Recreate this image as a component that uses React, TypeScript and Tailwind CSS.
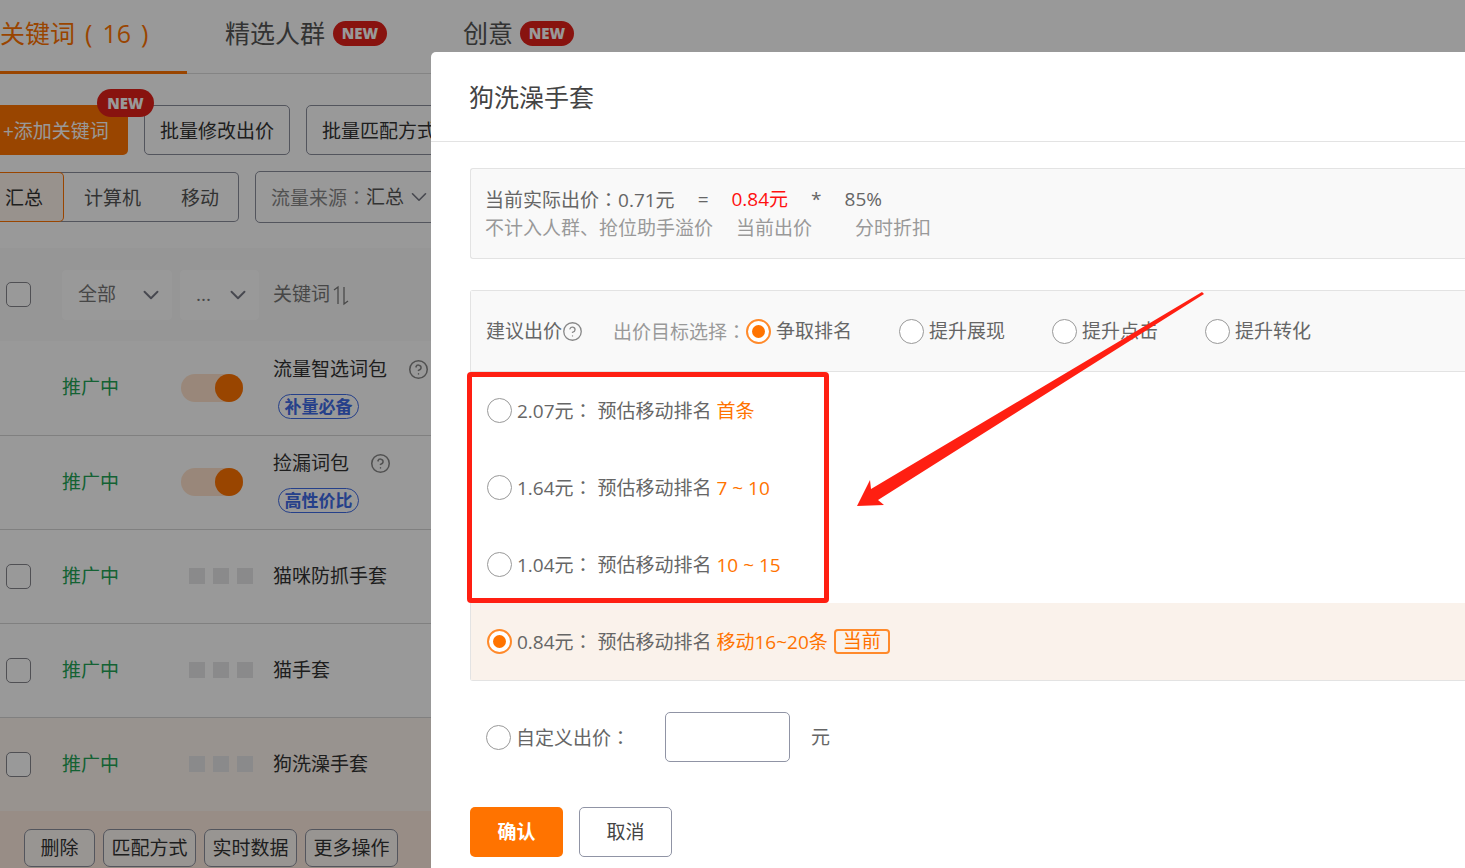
import { useState } from "react";
import type { ReactNode } from "react";
import { ChevronDown, CircleHelp } from "lucide-react";

type Keyword = {
	name: string;
	tag?: string;
	active?: boolean;
};

const KEYWORDS: Keyword[] = [
	{ name: "流量智选词包", tag: "补量必备" },
	{ name: "捡漏词包", tag: "高性价比" },
	{ name: "猫咪防抓手套" },
	{ name: "猫手套" },
	{ name: "狗洗澡手套", active: true },
];

const TARGETS = ["争取排名", "提升展现", "提升点击", "提升转化"];

const BIDS = [
	{ price: "2.07", rank: "首条" },
	{ price: "1.64", rank: "7 ~ 10" },
	{ price: "1.04", rank: "10 ~ 15" },
];

const CURRENT_BID = { price: "0.84", rank: "移动16~20条" };

// the TC face centres the colon in its cell
function Colon() {
	return <span className="font-['Noto_Sans_CJK_TC',sans-serif]">：</span>;
}

function NewBadge({ className = "" }: { className?: string }) {
	return (
		<span
			className={`flex items-center justify-center rounded-full bg-[#e3211a] font-['Noto_Sans',sans-serif] text-[15px] leading-none font-black text-white ${className}`}
		>
			NEW
		</span>
	);
}

function SortIcon() {
	return (
		<svg
			width="20"
			height="22"
			viewBox="0 0 20 22"
			fill="none"
			stroke="currentColor"
			strokeWidth="1.25"
			aria-hidden="true"
		>
			<path d="M3 6 L7 3 V20" />
			<path d="M13 3 V20 L17 17" />
		</svg>
	);
}

function Radio({
	name,
	checked,
	onChange,
	children,
}: {
	name: string;
	checked: boolean;
	onChange: () => void;
	children: ReactNode;
}) {
	return (
		<label className="flex items-center gap-[5px] whitespace-pre">
			<input
				type="radio"
				name={name}
				checked={checked}
				onChange={onChange}
				className="grid size-[25px] shrink-0 appearance-none place-content-center rounded-full border border-[#999] bg-white before:size-[13px] before:rounded-full checked:border-2 checked:border-[#ff8a2b] checked:before:bg-[#ff7300]"
			/>
			{children}
		</label>
	);
}

function BidLabel({ price, rank }: { price: string; rank: string }) {
	return (
		<span>
			{price}元
			<Colon /> 预估移动排名 <span className="text-[#ff7300]">{rank}</span>
		</span>
	);
}

function Check({ label }: { label: string }) {
	return (
		<input
			type="checkbox"
			aria-label={label}
			className="block size-[25px] appearance-none rounded-[5px] border border-[#85858c] bg-white checked:bg-[#ff7300]"
		/>
	);
}

function FilterSelect({
	label,
	value,
	className,
}: {
	label: string;
	value: string;
	className: string;
}) {
	return (
		<span className={`relative inline-flex h-[50px] ${className}`}>
			<select
				aria-label={label}
				className="w-full appearance-none rounded-sm bg-white pl-4 text-[#777]"
			>
				<option>{value}</option>
			</select>
			<ChevronDown
				size={26}
				strokeWidth={1.75}
				className="pointer-events-none absolute top-3 right-2 text-[#777985]"
			/>
		</span>
	);
}

function Tabs() {
	return (
		<nav className="flex h-[74px] border-b border-[#dcdcdc] text-[25px] text-[#555]">
			<a
				href="#keywords"
				className="-mb-px flex w-[187px] gap-2.5 border-b-[3px] border-[#ff7300] pt-[14px] leading-[38px] whitespace-nowrap text-[#ff7300]"
			>
				<span>关键词</span>
				<span>(</span>
				<span>16</span>
				<span>)</span>
			</a>
			<a
				href="#people"
				className="ml-[38px] flex h-[66px] w-[238px] items-center gap-2"
			>
				精选人群
				<NewBadge className="h-[25px] w-[54px]" />
			</a>
			<a href="#creative" className="flex h-[66px] items-center gap-[7px]">
				创意
				<NewBadge className="h-[25px] w-[54px]" />
			</a>
		</nav>
	);
}

function Toolbar() {
	return (
		<div className="flex h-[174px] flex-col pt-[31px]">
			<div className="flex h-[50px] shrink-0 gap-4">
				<button className="relative w-32 rounded-r-[5px] bg-[#ff7300] pt-0.5 pl-[3px] text-left whitespace-nowrap text-white">
					+添加关键词
					<NewBadge className="absolute -top-4 left-[97px] h-7 w-[57px]" />
				</button>
				<button className="w-[146px] rounded-[5px] border border-[#8b8e9c] pt-0.5">
					批量修改出价
				</button>
				<button className="w-[146px] rounded-[5px] border border-[#8b8e9c] pt-0.5">
					批量匹配方式
				</button>
			</div>
			<div className="mt-4 flex items-center gap-4 text-[#555]">
				<div className="flex h-[50px] w-[239px] rounded-r-[5px] border border-l-0 border-[#8b8e9c]">
					<button className="-my-px w-16 rounded-r-[5px] border border-l-0 border-[#ff7300] bg-[#fdf3ec] pt-0.5 pl-[5px] text-left text-[#333]">
						汇总
					</button>
					<button className="ml-5 pt-0.5">计算机</button>
					<button className="ml-10 pt-0.5">移动</button>
				</div>
				<button className="flex h-[52px] w-[190px] items-center rounded-[5px] border border-[#8b8e9c] pl-[15px] whitespace-nowrap">
					<span className="text-[#888]">
						流量来源
						<Colon />
					</span>
					汇总
					<ChevronDown
						size={26}
						strokeWidth={1.5}
						className="ml-0.5 text-[#777985]"
					/>
				</button>
			</div>
		</div>
	);
}

function KeywordTable() {
	return (
		<table className="w-full table-fixed text-left">
			<colgroup>
				<col className="w-[62px]" />
				<col className="w-[118px]" />
				<col className="w-[93px]" />
				<col />
			</colgroup>
			<thead>
				<tr className="h-[93px] bg-[#fafafa] text-[#777]">
					<th className="pl-1.5 font-normal">
						<Check label="全选" />
					</th>
					<th className="align-middle font-normal">
						<FilterSelect label="状态" value="全部" className="w-[110px]" />
					</th>
					<th className="font-normal">
						<FilterSelect label="类型" value="..." className="w-[79px]" />
					</th>
					<th className="font-normal">
						<button className="flex items-center gap-px">
							关键词
							<SortIcon />
						</button>
					</th>
				</tr>
			</thead>
			<tbody>
				{KEYWORDS.map((k) => (
					<tr
						key={k.name}
						className={
							k.active
								? "h-[94px] bg-[#fdf5ee]"
								: "h-[94px] border-b border-[#d6d6d6]"
						}
					>
						<td className="pl-1.5">{!k.tag && <Check label={k.name} />}</td>
						<td className="text-[#22a455]">推广中</td>
						<td>
							{k.tag ? (
								<input
									type="checkbox"
									role="switch"
									defaultChecked
									aria-label={k.name}
									className="ml-px flex h-7 w-[62px] appearance-none rounded-full bg-[#ffe2cb] before:size-7 before:rounded-full before:bg-[#ff7300] checked:justify-end"
								/>
							) : (
								<span className="ml-[9px] flex gap-2">
									<i className="size-4 bg-[#e6e6e8]" />
									<i className="size-4 bg-[#e6e6e8]" />
									<i className="size-4 bg-[#e6e6e8]" />
								</span>
							)}
						</td>
						<td>
							<div className="flex h-[25px] items-center gap-[21px]">
								{k.name}
								{k.tag && (
									<CircleHelp
										size={21}
										strokeWidth={1.75}
										className="text-[#888]"
									/>
								)}
							</div>
							{k.tag && (
								<span className="mt-3 ml-[5px] flex h-[25px] w-[81px] items-center justify-center rounded-full border border-[#3f6be6] text-[17px] leading-none font-bold text-[#3f6be6]">
									{k.tag}
								</span>
							)}
						</td>
					</tr>
				))}
				<tr className="h-[74px] bg-[#feecdf]">
					<td colSpan={4}>
						<div className="flex gap-2 pl-6">
							<button className="h-[38px] w-[71px] rounded-[7px] border border-[#8b8e9c] bg-[#fdf8f4]">
								删除
							</button>
							{["匹配方式", "实时数据", "更多操作"].map((text) => (
								<button
									key={text}
									className="h-[38px] w-[93px] rounded-[7px] border border-[#8b8e9c] bg-[#fdf8f4] whitespace-nowrap"
								>
									{text}
								</button>
							))}
						</div>
					</td>
				</tr>
			</tbody>
		</table>
	);
}

function BidDialog() {
	const [target, setTarget] = useState(TARGETS[0]);
	const [bid, setBid] = useState(CURRENT_BID.price);

	return (
		<section
			role="dialog"
			aria-labelledby="dialog-title"
			className="min-w-0 flex-1 rounded-tl-[5px] bg-white text-[#666]"
		>
			<header className="flex h-[90px] items-center border-b border-[#e3e3e3] pt-0.5 pl-[38px]">
				<h2 id="dialog-title" className="text-[25px] text-[#444]">
					狗洗澡手套
				</h2>
			</header>

			<div className="pt-[26px] pl-[39px]">
				<div className="rounded-l-[3px] border border-r-0 border-[#e3e3e3] bg-[#f9f9f9] py-4 pl-[14px] leading-7">
					<p className="flex gap-[23px]">
						<span>
							当前实际出价
							<Colon />
							0.71元
						</span>
						<span>=</span>
						<span className="text-[#ff1010]">0.84元</span>
						<span>*</span>
						<span>85%</span>
					</p>
					<p className="flex gap-[23px] text-[#999]">
						<span>不计入人群、抢位助手溢价</span>
						<span>当前出价</span>
						<span className="ml-5">分时折扣</span>
					</p>
				</div>

				<div className="relative mt-[31px] rounded-l-[3px] border border-r-0 border-[#e3e3e3]">
					<div className="flex h-[81px] items-center border-b border-[#e3e3e3] bg-[#f9f9f9] pl-[15px] whitespace-nowrap">
						<span>建议出价</span>
						<CircleHelp size={21} strokeWidth={1.5} className="text-[#888]" />
						<span className="ml-[30px] text-[#999]">
							出价目标选择
							<Colon />
						</span>
						<div className="flex gap-[47px]">
							{TARGETS.map((t) => (
								<Radio
									key={t}
									name="target"
									checked={target === t}
									onChange={() => setTarget(t)}
								>
									{t}
								</Radio>
							))}
						</div>
					</div>

					<div className="relative">
						{BIDS.map((b) => (
							<div key={b.price} className="flex h-[77px] items-center pl-4">
								<Radio
									name="bid"
									checked={bid === b.price}
									onChange={() => setBid(b.price)}
								>
									<BidLabel {...b} />
								</Radio>
							</div>
						))}
						<div className="pointer-events-none absolute inset-y-0 -left-1 w-[362px] rounded-[4px] border-5 border-[#ff1f12]" />
					</div>
					<div className="flex h-[77px] items-center gap-1.5 bg-[#faf2eb] pl-4">
						<Radio
							name="bid"
							checked={bid === CURRENT_BID.price}
							onChange={() => setBid(CURRENT_BID.price)}
						>
							<BidLabel {...CURRENT_BID} />
						</Radio>
						<span className="flex h-[25px] w-14 items-center justify-center rounded-[4px] border-2 border-[#ff8a2b] leading-none text-[#ff7300]">
							当前
						</span>
					</div>

					<svg
						width="348"
						height="215"
						viewBox="0 0 348 215"
						className="pointer-events-none absolute top-px left-[386px]"
						aria-hidden="true"
					>
						<path
							d="M0 214 L13 188 L14 197 L345 0 L347 2 L21 208 L27 213 Z"
							fill="#ff1f12"
						/>
					</svg>
				</div>

				<div className="mt-[31px] flex h-[50px] items-center pl-4">
					<Radio
						name="bid"
						checked={bid === "custom"}
						onChange={() => setBid("custom")}
					>
						<span>
							自定义出价
							<Colon />
						</span>
					</Radio>
					<input
						type="text"
						aria-label="自定义出价"
						className="ml-[35px] h-[50px] w-[125px] rounded-[5px] border border-[#9094a5] px-3"
					/>
					<span className="ml-[21px]">元</span>
				</div>

				<div className="mt-[45px] flex gap-4">
					<button className="h-[50px] w-[93px] rounded-[5px] bg-[#ff7300] font-bold text-white">
						确认
					</button>
					<button className="h-[50px] w-[93px] rounded-[5px] border border-[#9094a5] text-[#444]">
						取消
					</button>
				</div>
			</div>
		</section>
	);
}

export default function App() {
	return (
		<div className="h-screen overflow-hidden bg-white font-['Open_Sans','Noto_Sans_CJK_SC',sans-serif] text-[19px] leading-[25px] text-[#333]">
			<Tabs />
			<Toolbar />
			<KeywordTable />
			<div className="fixed inset-0 flex overflow-hidden bg-black/40 pt-[52px] pl-[431px]">
				<BidDialog />
			</div>
		</div>
	);
}
